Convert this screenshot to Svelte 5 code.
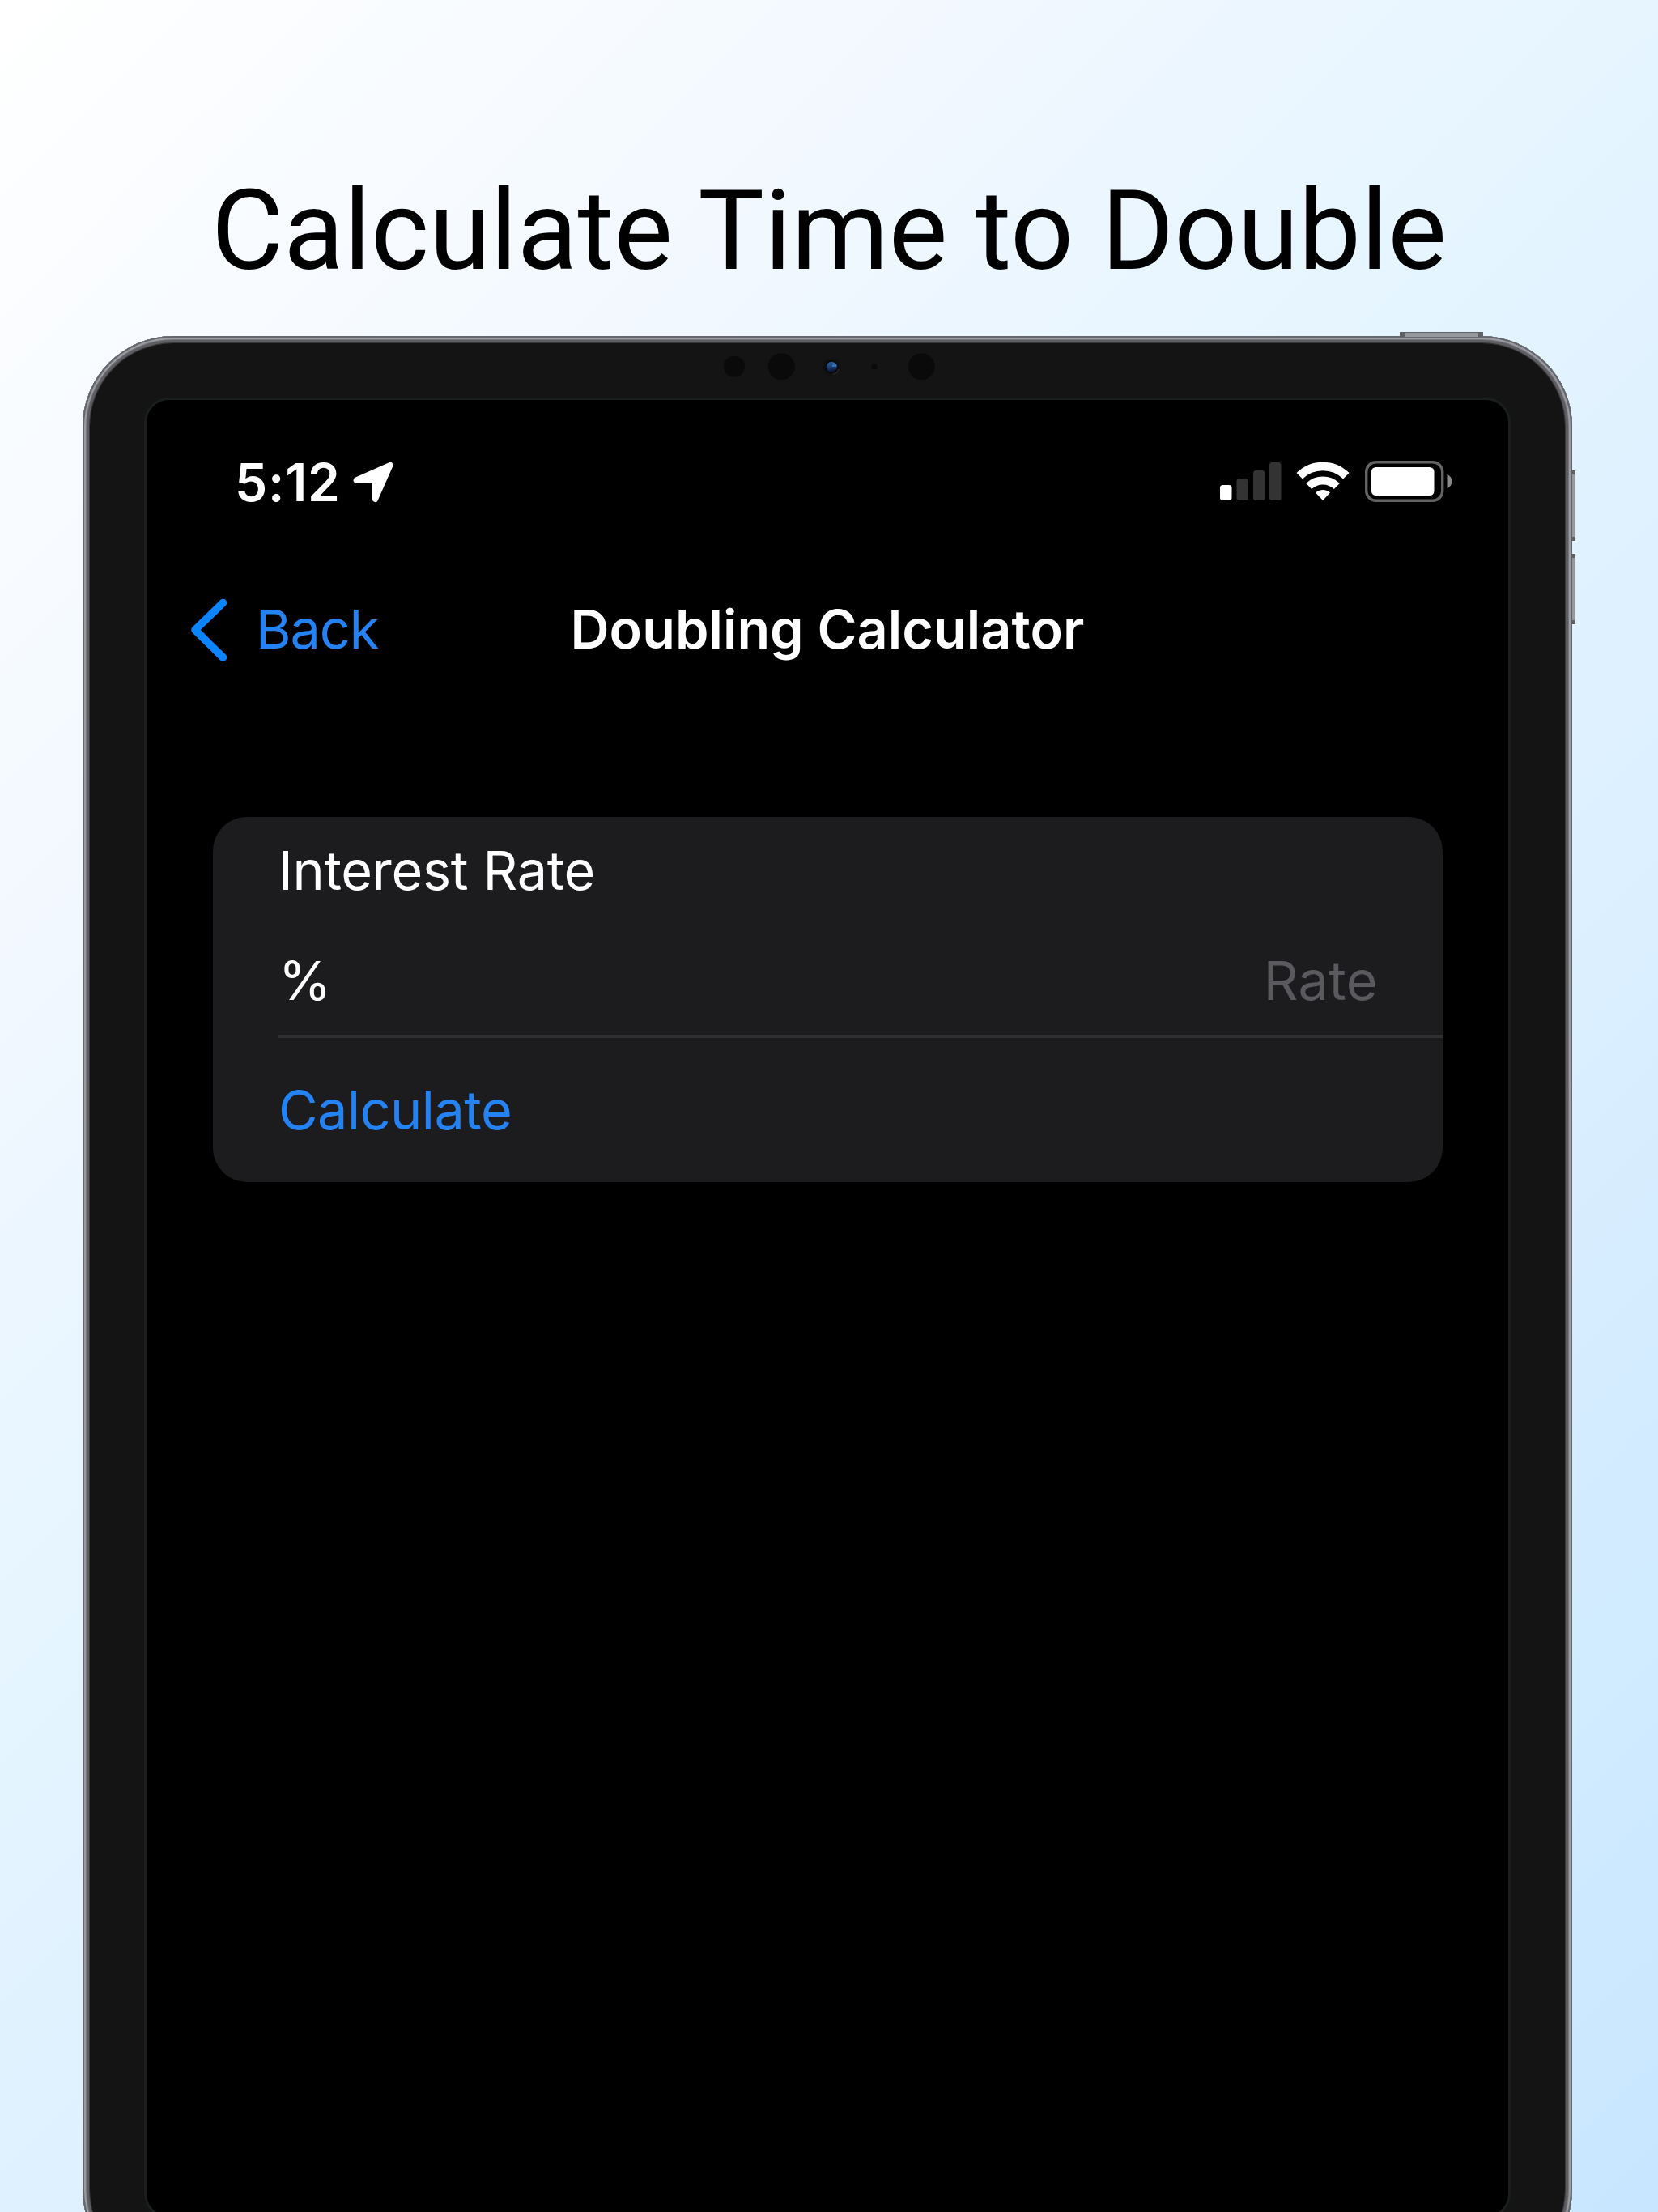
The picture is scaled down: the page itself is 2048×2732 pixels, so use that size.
<script>
  const bars = [
    { x: 0, h: 19, on: true },
    { x: 20.5, h: 27, on: false },
    { x: 41, h: 37, on: false },
    { x: 61, h: 47, on: false }
  ];
</script>

<main class="poster">
  <h1>Calculate Time to Double</h1>

  <div class="device">
    <i class="key power"></i>
    <i class="key vol up"></i>
    <i class="key vol down"></i>
    <div class="bezel">
      <svg class="sensors" viewBox="860 424 340 64" width="340" height="64">
        <defs>
          <linearGradient id="lens" x1="0" y1="0" x2="0.2" y2="1">
            <stop offset="0" stop-color="#2a6098" />
            <stop offset="0.5" stop-color="#1d4478" />
            <stop offset="1" stop-color="#0a1230" />
          </linearGradient>
        </defs>
        <g fill="#0a0a0a">
          <circle cx="907" cy="452.7" r="13" />
          <circle cx="965.3" cy="452.7" r="16.5" />
          <circle cx="1080" cy="452.7" r="3.5" />
          <circle cx="1138.3" cy="452.7" r="16.5" />
        </g>
        <circle cx="1027.5" cy="453" r="11" fill="#101010" />
        <path d="M1036 456a9.500 9.500 0 0 1-7 6.500" fill="none" stroke="#242424" stroke-width="2" />
        <circle cx="1027.300" cy="453.300" r="8" fill="#070709" />
        <circle cx="1027.300" cy="453.300" r="6.600" fill="url(#lens)" />
        <path d="M1027.800 453l1-5.500 4.500 2.500 .3 3z" fill="#3371b4" />
      </svg>

      <div class="screen">
        <header class="status">
          <div class="left">
            <span class="time">5:12</span>
            <svg class="arrow" viewBox="0 0 52 52" width="52" height="52">
              <path d="M4 24L46 5.500L27.500 47.500V24.500Z" fill="#fff" stroke="#fff" stroke-width="7" stroke-linejoin="round" />
            </svg>
          </div>
          <div class="right">
            <svg viewBox="0 0 76 52" width="76" height="52">
              {#each bars as b}
                <rect x={b.x} y={49 - b.h} width="14.500" height={b.h} rx="3.500" fill={b.on ? '#fff' : '#333'} />
              {/each}
            </svg>
            <svg class="wifi" viewBox="0 0 66 52" width="66" height="52">
              <g fill="none" stroke="#fff">
                <path d="M4.200 18.800A41 41 0 0 1 61.800 18.800" stroke-width="10.500" />
                <path d="M15.700 31.500A25 25 0 0 1 50.300 31.500" stroke-width="10" />
              </g>
              <path d="M33 49L24 39.500A13 13 0 0 1 42 39.500Z" fill="#fff" />
            </svg>
            <svg class="battery" viewBox="0 0 110 52" width="110" height="52">
              <rect x="1.700" y="1.700" width="94" height="47.600" rx="12" fill="none" stroke="#636363" stroke-width="3.400" />
              <rect x="8" y="8" width="77.500" height="35" rx="5.500" fill="#fff" />
              <path d="M101.500 17C109.500 20 109.500 31 101.500 34Z" fill="#8a8a8a" />
            </svg>
          </div>
        </header>

        <nav>
          <a class="back" href="#back">
            <svg viewBox="0 0 46 78" width="46" height="78">
              <path d="M40.500 5.500L6 39L40.500 73" fill="none" stroke="#0a84ff" stroke-width="9.500" stroke-linecap="round" stroke-linejoin="round" />
            </svg>
            <span>Back</span>
          </a>
          <strong>Doubling Calculator</strong>
        </nav>

        <section class="card">
          <div class="row label">Interest Rate</div>
          <div class="row value"><span class="pct">%</span><span class="rate">Rate</span></div>
          <div class="row action">Calculate</div>
        </section>
      </div>
    </div>
  </div>
</main>

<style>
  :global(body) {
    margin: 0;
  }
  .poster {
    width: 2048px;
    height: 2732px;
    overflow: hidden;
    display: flex;
    flex-direction: column;
    align-items: center;
    background: linear-gradient(135deg, #ffffff 0%, #f2f8ff 25%, #e6f5ff 42%, #dff1ff 58%, #cbe8ff 95%, #c8e6ff 100%);
    font-family: Inter, 'Liberation Sans', sans-serif;
  }
  h1 {
    margin: 0;
    height: 415px;
    flex: none;
    box-sizing: border-box;
    padding-top: 205px;
    font: 400 137.150px/160px Roboto, sans-serif;
    color: #000;
    white-space: nowrap;
  }
  .device {
    position: relative;
    flex: none;
    box-sizing: border-box;
    width: 1840px;
    height: 2401px;
    margin-right: 4px;
    border-radius: 112px;
    background: #5d5e62;
    padding: 9px;
    box-shadow:
      inset 0 0 0 2px #66676c,
      inset 0 0 0 4px #9b9ca3,
      inset 0 0 0 5px #76777d,
      inset 0 0 0 8px #5d5d62,
      inset 0 0 0 9px #38383a;
  }
  .key {
    position: absolute;
    box-sizing: border-box;
    background: #969a9e;
    border: 1px solid #5e6063;
  }
  .power {
    left: 1627px;
    top: -5px;
    width: 103px;
    height: 6px;
    border-width: 1px 6px 0;
    border-radius: 1px;
  }
  .vol {
    left: 1839px;
    width: 5px;
    height: 87px;
    border-width: 5px 1px;
    border-radius: 1px;
  }
  .up {
    top: 166px;
  }
  .down {
    top: 269px;
  }
  .bezel {
    box-sizing: border-box;
    height: 100%;
    border-radius: 103px;
    background: #141414;
    padding: 0 67px 67px;
  }
  .sensors {
    display: block;
    margin: 0 0 3px 682px;
  }
  .screen {
    box-sizing: border-box;
    height: 2249px;
    border: 3px solid #1a1e1e;
    border-radius: 31px;
    background: #000;
    color: #fff;
  }
  .status {
    display: flex;
    justify-content: space-between;
    align-items: flex-start;
    padding: 75px 67px 0 109px;
    height: 60px;
  }
  .left,
  .right {
    display: flex;
  }
  .time {
    font-size: 64px;
    line-height: 54px;
    height: 54px;
    font-weight: 600;
    letter-spacing: 0.800px;
  }
  .arrow {
    margin-left: 15px;
  }
  .wifi {
    margin-left: 18px;
  }
  .battery {
    margin-left: 19px;
  }
  nav {
    display: grid;
    grid-template-columns: 1fr auto 1fr;
    align-items: center;
    margin-top: 110px;
    height: 78px;
    padding: 0 54px;
    font-size: 66.500px;
    line-height: 76px;
  }
  .back {
    display: flex;
    align-items: center;
    gap: 35px;
    color: #2482f2;
    text-decoration: none;
    letter-spacing: -1px;
  }
  .back span,
  nav strong {
    padding-bottom: 2px;
  }
  nav strong {
    font-weight: 600;
    letter-spacing: 0.050px;
  }
  .card {
    box-sizing: border-box;
    margin: 192px 82px 0;
    width: 1519px;
    height: 451px;
    border-radius: 42px;
    background: #1c1c1e;
    padding-left: 81px;
    font-size: 66.500px;
    overflow: hidden;
  }
  .row {
    display: flex;
    align-items: center;
    box-sizing: border-box;
  }
  .label {
    height: 132px;
    letter-spacing: -0.300px;
  }
  .value {
    height: 141px;
    justify-content: space-between;
    padding: 2px 80px 0 0;
    border-bottom: 4px solid #303032;
  }
  .action {
    height: 177px;
    color: #2482f2;
    letter-spacing: -0.500px;
  }
  .rate {
    color: #5a5a5e;
    letter-spacing: 0.400px;
  }
</style>
